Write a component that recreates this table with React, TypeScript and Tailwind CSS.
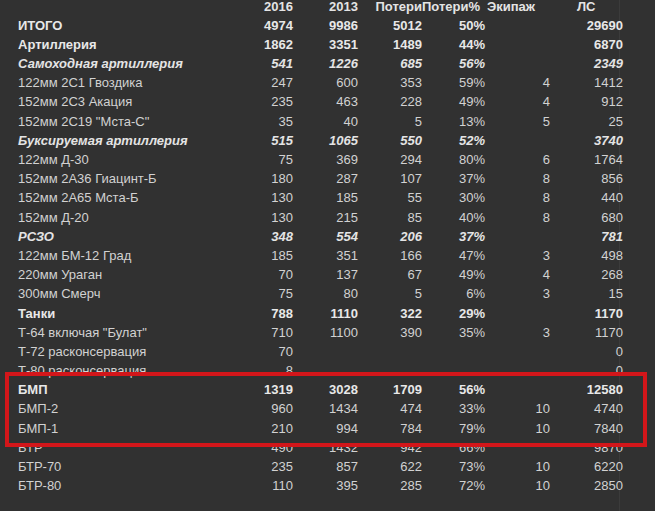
import React from "react"

type Style = "n" | "b" | "bi"

interface Row {
  label: string
  cells: string[]
  style?: Style
}

const rows: Row[] = [
  { label: "ИТОГО", cells: ["4974", "9986", "5012", "50%", "", "29690"], style: "b" },
  { label: "Артиллерия", cells: ["1862", "3351", "1489", "44%", "", "6870"], style: "b" },
  { label: "Самоходная артиллерия", cells: ["541", "1226", "685", "56%", "", "2349"], style: "bi" },
  { label: "122мм 2С1 Гвоздика", cells: ["247", "600", "353", "59%", "4", "1412"] },
  { label: "152мм 2С3 Акация", cells: ["235", "463", "228", "49%", "4", "912"] },
  { label: "152мм 2С19 \"Мста-С\"", cells: ["35", "40", "5", "13%", "5", "25"] },
  { label: "Буксируемая артиллерия", cells: ["515", "1065", "550", "52%", "", "3740"], style: "bi" },
  { label: "122мм Д-30", cells: ["75", "369", "294", "80%", "6", "1764"] },
  { label: "152мм 2А36 Гиацинт-Б", cells: ["180", "287", "107", "37%", "8", "856"] },
  { label: "152мм 2А65 Мста-Б", cells: ["130", "185", "55", "30%", "8", "440"] },
  { label: "152мм Д-20", cells: ["130", "215", "85", "40%", "8", "680"] },
  { label: "РСЗО", cells: ["348", "554", "206", "37%", "", "781"], style: "bi" },
  { label: "122мм БМ-12 Град", cells: ["185", "351", "166", "47%", "3", "498"] },
  { label: "220мм Ураган", cells: ["70", "137", "67", "49%", "4", "268"] },
  { label: "300мм Смерч", cells: ["75", "80", "5", "6%", "3", "15"] },
  { label: "Танки", cells: ["788", "1110", "322", "29%", "", "1170"], style: "b" },
  { label: "Т-64 включая \"Булат\"", cells: ["710", "1100", "390", "35%", "3", "1170"] },
  { label: "Т-72 расконсервация", cells: ["70", "", "", "", "", "0"] },
  { label: "Т-80 расконсервация", cells: ["8", "", "", "", "", "0"] },
  { label: "БМП", cells: ["1319", "3028", "1709", "56%", "", "12580"], style: "b" },
  { label: "БМП-2", cells: ["960", "1434", "474", "33%", "10", "4740"] },
  { label: "БМП-1", cells: ["210", "994", "784", "79%", "10", "7840"] },
  { label: "БТР", cells: ["490", "1432", "942", "66%", "", "9870"] },
  { label: "БТР-70", cells: ["235", "857", "622", "73%", "10", "6220"] },
  { label: "БТР-80", cells: ["110", "395", "285", "72%", "10", "2850"] },
]

const grid = "grid grid-cols-[215px_60px_65px_64px_63px_65px_73px] h-[19.2px] items-center"

function rowClass(style?: Style) {
  if (style === "b") return "font-bold text-[#e8e8e8]"
  if (style === "bi") return "font-bold italic text-[#e4e4e4]"
  return "text-[#d2d2d2]"
}

export default function App() {
  return (
    <div className="relative w-[655px] h-[511px] overflow-hidden bg-[#313131] font-['Liberation_Sans',Arial,sans-serif] text-[13px] leading-none">
      {/* faint sheet gridline */}
      <div className="absolute top-0 bottom-0 left-[619px] w-px bg-[#3b3b3b]" />

      <div className="relative flex flex-col pl-[18px] mt-[-3.6px]">
        {/* header */}
        <div className={`${grid} font-bold text-[#e4e4e4]`}>
          <div />
          <div className="text-right">2016</div>
          <div className="text-right">2013</div>
          <div className="text-right">Потери</div>
          <div className="whitespace-nowrap">Потери%</div>
          <div className="pl-[2px]">Экипаж</div>
          <div className="pl-[27px]">ЛС</div>
        </div>

        {rows.map((r, i) => (
          <div key={i} className={`${grid} ${rowClass(r.style)}`}>
            <div className="whitespace-nowrap">{r.label}</div>
            {r.cells.map((c, j) => (
              <div key={j} className="text-right whitespace-nowrap">
                {c}
              </div>
            ))}
          </div>
        ))}
      </div>

      {/* highlight box */}
      <div className="absolute left-[5px] top-[372px] w-[642px] h-[75px] border-4 border-[#d3161a]" />
    </div>
  )
}
